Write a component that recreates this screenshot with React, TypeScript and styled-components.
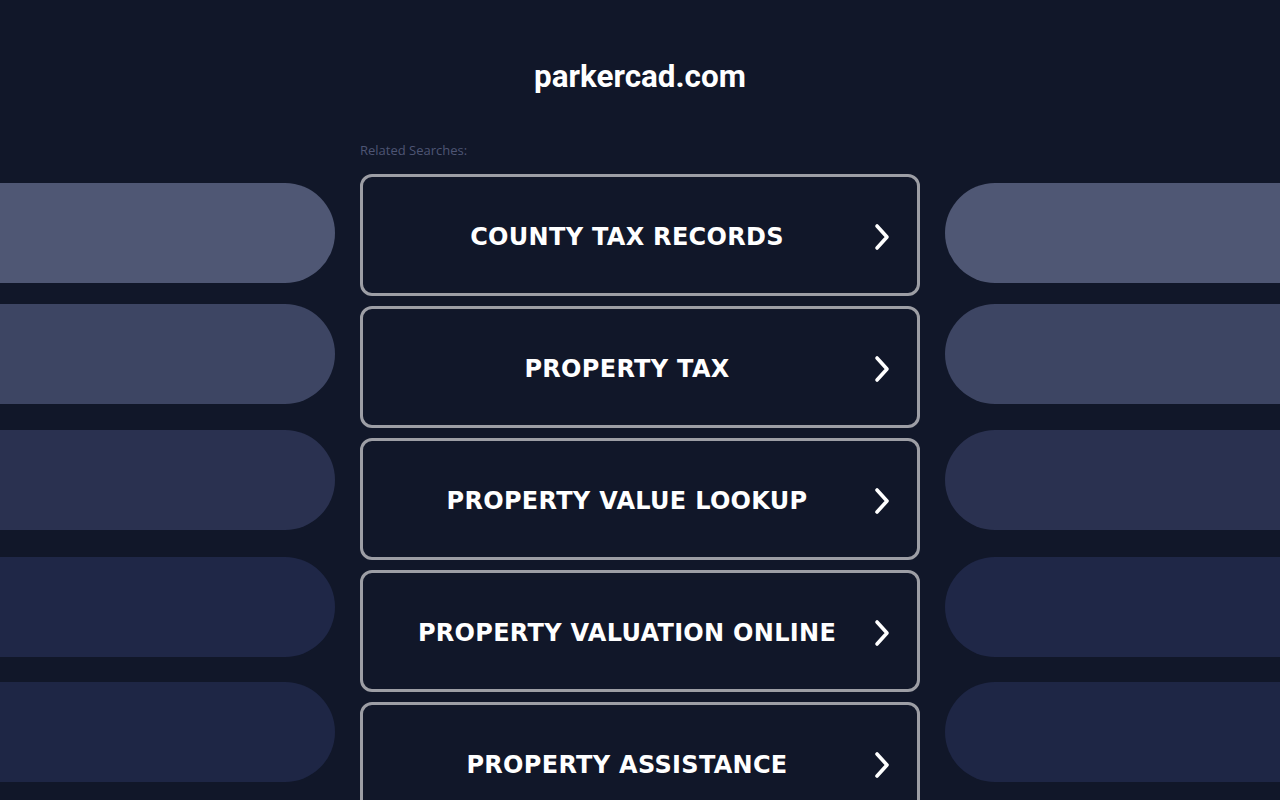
import React from "react";
import styled, { createGlobalStyle } from "styled-components";

const GlobalStyle = createGlobalStyle`
  html, body {
    margin: 0;
    padding: 0;
    background: #111729;
    overflow: hidden;
  }
  body {
    font-family: "Liberation Sans", Arial, sans-serif;
  }
`;

const Page = styled.div`
  width: 1280px;
  height: 800px;
  background: #111729;
  overflow: hidden;
`;

const Header = styled.header`
  height: 140px;
  display: flex;
  justify-content: center;
  padding-top: 58px;
  box-sizing: border-box;
`;

const Title = styled.h1`
  margin: 0;
  font-family: Roboto, "Liberation Sans", Arial, sans-serif;
  font-weight: 700;
  font-size: 31.4px;
  line-height: 38px;
  color: #ffffff;
`;

const Body = styled.div`
  display: grid;
  grid-template-columns: 335px 560px 335px;
  column-gap: 25px;
`;

const Side = styled.div`
  display: flex;
  flex-direction: column;
  padding-top: 43px;
`;

const Pill = styled.div<{ $tone: string; $side: "left" | "right"; $space: number }>`
  height: 100px;
  margin-top: ${(p) => p.$space}px;
  background: ${(p) => p.$tone};
  border-radius: ${(p) => (p.$side === "left" ? "0 50px 50px 0" : "50px 0 0 50px")};
`;

const Center = styled.div`
  display: flex;
  flex-direction: column;
`;

const Related = styled.div`
  font-family: "Open Sans", "Liberation Sans", sans-serif;
  font-size: 13px;
  line-height: 20px;
  color: #4e5574;
  height: 34px;
`;

const List = styled.div`
  display: flex;
  flex-direction: column;
  gap: 10px;
`;

const Link = styled.a`
  box-sizing: border-box;
  height: 122px;
  border: 3px solid #9d9ea5;
  border-radius: 12px;
  display: flex;
  align-items: center;
  padding: 3px 27px 0 17px;
  text-decoration: none;
  color: #ffffff;
`;

const Label = styled.span`
  flex: 1;
  text-align: center;
  font-family: "DejaVu Sans", Verdana, sans-serif;
  font-weight: 700;
  font-size: 24px;
  letter-spacing: 0.3px;
  color: #ffffff;
`;

const Chevron = () => (
  <svg width="16" height="28" viewBox="0 0 16 28" fill="none">
    <path
      d="M3 3 L13 14 L3 25"
      stroke="#ffffff"
      strokeWidth="3.6"
      strokeLinecap="round"
      strokeLinejoin="round"
    />
  </svg>
);

const pills = [
  { tone: "#4f5774", space: 0 },
  { tone: "#3d4563", space: 21 },
  { tone: "#2a3150", space: 26 },
  { tone: "#1f2747", space: 27 },
  { tone: "#1e2645", space: 25 },
];

const searches = [
  "COUNTY TAX RECORDS",
  "PROPERTY TAX",
  "PROPERTY VALUE LOOKUP",
  "PROPERTY VALUATION ONLINE",
  "PROPERTY ASSISTANCE",
];

export default function App() {
  return (
    <Page>
      <GlobalStyle />
      <Header>
        <Title>parkercad.com</Title>
      </Header>
      <Body>
        <Side>
          {pills.map((p, i) => (
            <Pill key={i} $tone={p.tone} $space={p.space} $side="left" />
          ))}
        </Side>
        <Center>
          <Related>Related Searches:</Related>
          <List>
            {searches.map((s) => (
              <Link key={s} href="#">
                <Label>{s}</Label>
                <Chevron />
              </Link>
            ))}
          </List>
        </Center>
        <Side>
          {pills.map((p, i) => (
            <Pill key={i} $tone={p.tone} $space={p.space} $side="right" />
          ))}
        </Side>
      </Body>
    </Page>
  );
}
